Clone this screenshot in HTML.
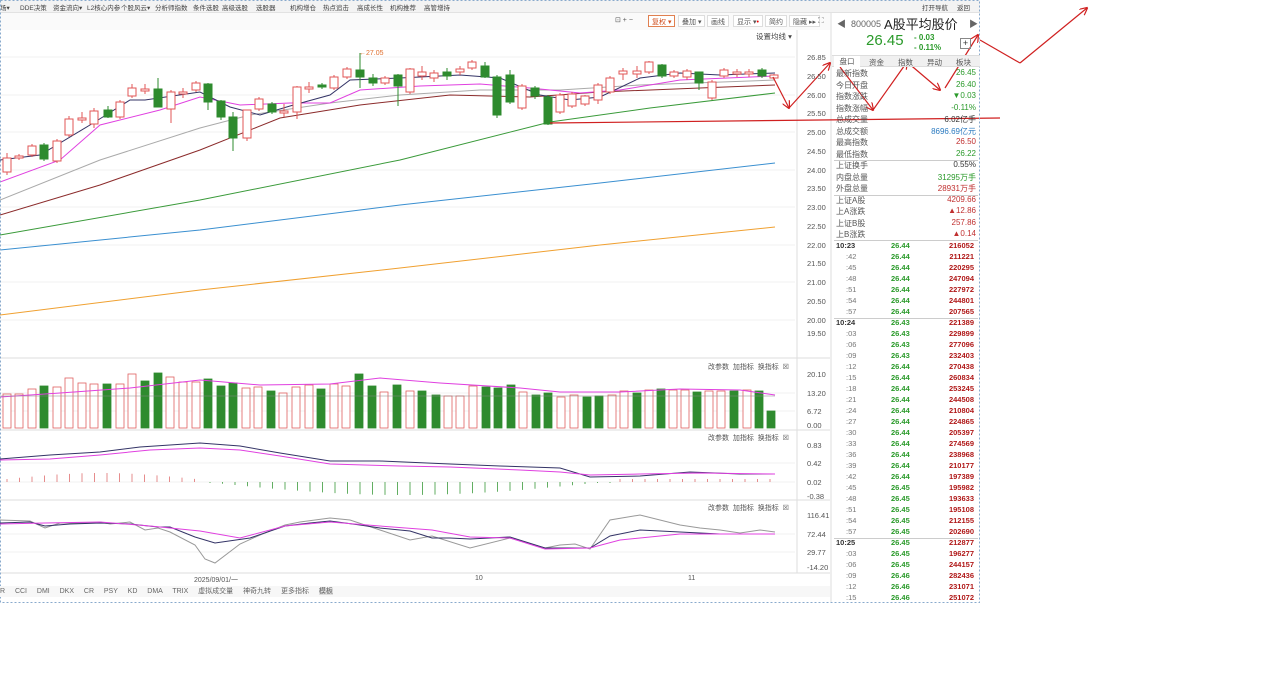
<!DOCTYPE html>
<html><head><meta charset="utf-8"><style>
*{margin:0;padding:0;box-sizing:border-box}
body{width:1278px;height:677px;background:#fff;font-family:"Liberation Sans","Noto Sans CJK SC",sans-serif;position:relative;overflow:hidden;font-size:8px;color:#333}
.abs{position:absolute;white-space:nowrap}
#menu{left:0;top:0;width:980px;height:13px;background:#f3f3f3;border-bottom:1px solid #e2e2e2}
#menu span{position:absolute;top:2px;font-size:6.5px;color:#444;white-space:nowrap}
#tool{left:0;top:13px;width:830px;height:17px;background:#fafafa}
.btn{position:absolute;top:15px;height:12px;font-size:7px;color:#555;padding:1px 3px;border:1px solid #ddd;background:#fff}
.ax{position:absolute;font-size:7.5px;color:#555;left:807px}
.row{position:absolute;left:836px;width:140px;height:11px;font-size:8px}
.row b{font-weight:normal;position:absolute;right:0}
.tk{position:absolute;left:836px;width:140px;height:11px;font-size:7.5px;font-weight:bold}
.tk i{font-style:normal;position:absolute}
.lab{position:absolute;font-size:7px;color:#555}
</style></head><body>
<div class="abs" id="menu">
<span style="left:0">场▾</span><span style="left:20px">DDE决策</span><span style="left:53px">资金流向▾</span><span style="left:87px">L2核心内参</span><span style="left:121px">个股风云▾</span><span style="left:155px">分析师指数</span><span style="left:193px">条件选股</span><span style="left:222px">高级选股</span><span style="left:256px">选股器</span><span style="left:290px">机构增仓</span><span style="left:323px">热点追击</span><span style="left:357px">高成长性</span><span style="left:390px">机构推荐</span><span style="left:424px">高管增持</span>
<span style="left:922px">打开导航</span><span style="left:957px">返回</span></div>
<div class="abs" id="tool"></div>
<div class="btn" style="left:612px;border:none;background:none">⊡ + −</div>
<div class="btn" style="left:648px;color:#d05020;border-color:#e08050">复权 ▾</div>
<div class="btn" style="left:678px">叠加 ▾</div>
<div class="btn" style="left:707px">画线</div>
<div class="btn" style="left:733px">显示 ▾<span style="color:#e00">•</span></div>
<div class="btn" style="left:765px">简约</div>
<div class="btn" style="left:789px">隐藏 ▸▸</div>
<div class="abs" style="left:818px;top:16px;font-size:8px;color:#777">⛶</div>
<div class="abs" style="left:756px;top:31px;font-size:7.5px;color:#444">设置均线 ▾</div>
<div class="abs" style="left:359px;top:50px;font-size:7px;color:#e07030">←27.05</div>

<svg class="abs" style="left:0;top:0" width="1278" height="677" id="sv">
<defs><marker id="ar" markerWidth="8" markerHeight="8" refX="7" refY="4" orient="auto" markerUnits="userSpaceOnUse"><path d="M0,0 L8,4 L0,8" fill="none" stroke="#d02020" stroke-width="1.2"/></marker></defs>
<g stroke="#f0f0f0" stroke-width="1">
<line x1="0" y1="57" x2="795" y2="57"/><line x1="0" y1="95" x2="795" y2="95"/><line x1="0" y1="132" x2="795" y2="132"/><line x1="0" y1="170" x2="795" y2="170"/><line x1="0" y1="207" x2="795" y2="207"/><line x1="0" y1="245" x2="795" y2="245"/><line x1="0" y1="282" x2="795" y2="282"/><line x1="0" y1="320" x2="795" y2="320"/>
<line x1="0" y1="393" x2="795" y2="393"/><line x1="0" y1="411" x2="795" y2="411"/><line x1="0" y1="463" x2="795" y2="463"/><line x1="0" y1="482" x2="795" y2="482"/><line x1="0" y1="534" x2="795" y2="534"/><line x1="0" y1="552" x2="795" y2="552"/>
</g>
<g stroke="#ddd"><line x1="0" y1="358" x2="830" y2="358"/><line x1="0" y1="430" x2="830" y2="430"/><line x1="0" y1="500" x2="830" y2="500"/><line x1="0" y1="573" x2="830" y2="573"/><line x1="797" y1="30" x2="797" y2="573"/><line x1="831" y1="13" x2="831" y2="603"/></g>
<g fill="none" stroke-width="1">
<polyline stroke="#f0a030" points="0,315 200,290 400,268 600,245 775,227"/>
<polyline stroke="#3a8fd0" points="0,250 200,230 400,205 600,183 775,163"/>
<polyline stroke="#3a9a3a" points="0,235 200,200 400,160 550,122 650,108 775,93"/>
<polyline stroke="#8b2b2b" points="0,215 100,185 200,150 280,118 360,105 450,95 530,97 600,92 700,88 775,85"/>
<polyline stroke="#aaa" points="0,200 100,160 200,128 250,115 330,103 400,95 480,90 560,90 640,85 775,80"/>
<polyline stroke="#e040e0" points="0,182 60,160 100,125 160,110 200,97 240,105 290,103 330,103 360,90 420,86 480,84 530,88 580,93 620,90 680,80 775,76"/>
<polyline stroke="#333366" points="0,160 40,155 90,125 130,100 145,100 200,92 230,107 260,115 290,106 330,95 350,80 400,78 460,75 500,78 540,95 570,100 600,97 640,78 680,73 720,75 775,73"/>
</g>
<g id="cd"></g><g id="vol"></g>
<g fill="none">
<polyline stroke="#e040e0" points="0,397 60,393 130,388 200,380 260,385 330,384 380,378 440,383 520,388 560,392 620,392 680,389 740,390 775,395"/>
<line x1="0" y1="396" x2="775" y2="396" stroke="#888" stroke-width="0.6"/>
<polyline stroke="#333366" points="0,459 50,455 100,452 140,447 200,443 240,446 280,453 330,461 380,461 450,464 500,466 560,468 590,477 640,476 690,472 740,474 775,474"/>
<polyline stroke="#e040e0" points="0,460 50,459 100,455 150,450 200,448 240,450 280,456 330,464 400,466 450,467 520,470 560,472 590,475 640,474 700,473 775,474"/>
<polyline stroke="#999" points="0,520 30,521 45,528 60,523 90,523 100,522 110,524 130,522 145,530 158,528 170,532 195,545 205,559 215,563 240,544 260,535 285,525 300,522 330,518 350,520 380,530 410,540 432,536 470,548 510,538 545,548 560,545 575,544 590,549 610,520 640,515 680,525 700,528 720,530 740,533 760,530 775,532"/>
<polyline stroke="#333366" points="0,523 30,522 45,526 70,524 100,523 130,524 158,527 170,527 195,537 215,543 250,538 285,526 310,523 330,521 360,525 380,528 410,531 432,538 450,538 470,539 510,537 545,548 590,548 610,536 640,530 680,532 720,534 775,534"/>
<polyline stroke="#e040e0" points="0,524 45,523 100,522 150,526 200,531 240,538 285,526 330,522 380,526 432,530 470,537 510,538 545,549 590,548 620,540 680,534 720,534 775,534"/>
</g>
<g id="mb"></g>
<g stroke="#d02020" stroke-width="1.2" fill="none">
<line x1="773" y1="77" x2="789" y2="108" marker-end="url(#ar)"/>
<line x1="789" y1="108" x2="830" y2="63" marker-end="url(#ar)"/>
<line x1="840" y1="67" x2="873" y2="110" marker-end="url(#ar)"/>
<line x1="873" y1="110" x2="907" y2="62" marker-end="url(#ar)"/>
<line x1="907" y1="62" x2="940" y2="90" marker-end="url(#ar)"/>
<line x1="945" y1="88" x2="978" y2="35" marker-end="url(#ar)"/>
<line x1="980" y1="40" x2="1020" y2="63"/>
<line x1="1020" y1="63" x2="1087" y2="8" marker-end="url(#ar)"/>
<line x1="550" y1="123" x2="1000" y2="118"/>
</g>
<rect x="0.5" y="0.5" width="979" height="602" fill="none" stroke="#88aacc" stroke-dasharray="2,2"/>
</svg>

<div class="ax" style="top:53px">26.85</div><div class="ax" style="top:72px">26.50</div><div class="ax" style="top:91px">26.00</div><div class="ax" style="top:109px">25.50</div><div class="ax" style="top:128px">25.00</div><div class="ax" style="top:147px">24.50</div><div class="ax" style="top:166px">24.00</div><div class="ax" style="top:184px">23.50</div><div class="ax" style="top:203px">23.00</div><div class="ax" style="top:222px">22.50</div><div class="ax" style="top:241px">22.00</div><div class="ax" style="top:259px">21.50</div><div class="ax" style="top:278px">21.00</div><div class="ax" style="top:297px">20.50</div><div class="ax" style="top:316px">20.00</div><div class="ax" style="top:329px">19.50</div>
<div class="ax" style="top:370px">20.10</div><div class="ax" style="top:389px">13.20</div><div class="ax" style="top:407px">6.72</div><div class="ax" style="top:421px">0.00</div>
<div class="ax" style="top:441px">0.83</div><div class="ax" style="top:459px">0.42</div><div class="ax" style="top:478px">0.02</div><div class="ax" style="top:492px">-0.38</div>
<div class="ax" style="top:511px">116.41</div><div class="ax" style="top:530px">72.44</div><div class="ax" style="top:548px">29.77</div><div class="ax" style="top:563px">-14.20</div>
<div class="lab" style="left:708px;top:362px">改参数 &nbsp;加指标 &nbsp;换指标 &nbsp;☒</div>
<div class="lab" style="left:708px;top:433px">改参数 &nbsp;加指标 &nbsp;换指标 &nbsp;☒</div>
<div class="lab" style="left:708px;top:503px">改参数 &nbsp;加指标 &nbsp;换指标 &nbsp;☒</div>
<div class="lab" style="left:194px;top:575px">2025/09/01/一</div><div class="lab" style="left:475px;top:575px">10</div><div class="lab" style="left:688px;top:575px">11</div>
<div class="lab" style="left:0;top:586px;color:#666;background:#f7f7f7;width:830px;height:11px;word-spacing:3px">R &nbsp;CCI &nbsp;DMI &nbsp;DKX &nbsp;CR &nbsp;PSY &nbsp;KD &nbsp;DMA &nbsp;TRIX &nbsp;虚拟成交量 &nbsp;神奇九转 &nbsp;更多指标 &nbsp;<span style="background:#ddd">模板</span></div>

<div class="abs" style="left:837px;top:17px;font-size:9px;color:#666">◀ &nbsp;800005</div>
<div class="abs" style="left:884px;top:14px;font-size:13px;color:#222">A股平均股价</div>
<div class="abs" style="left:969px;top:17px;font-size:9px;color:#666">▶</div>
<div class="abs" style="left:866px;top:32px;font-size:15px;color:#2a9a2a">26.45</div>
<div class="abs" style="left:914px;top:33px;font-size:8px;color:#2a9a2a;line-height:10px;font-weight:bold">- 0.03<br>- 0.11%</div>
<div class="abs" style="left:960px;top:38px;width:11px;height:11px;border:1px solid #888;font-size:9px;line-height:9px;text-align:center">+</div>
<div class="abs" style="left:832px;top:55px;width:148px;height:12px;background:#f0f0f0;border-top:1px solid #ddd;border-bottom:1px solid #ddd;font-size:7.5px;color:#555">
<span style="position:absolute;left:2px;top:0;width:26px;height:11px;background:#fff;text-align:center">盘口</span><span style="position:absolute;left:37px;top:1px">资金</span><span style="position:absolute;left:66px;top:1px">指数</span><span style="position:absolute;left:95px;top:1px">异动</span><span style="position:absolute;left:124px;top:1px">板块</span></div>
<div id="rp"></div>
<script>
var rows=[["最新指数","26.45","#2a9a2a"],["今日开盘","26.40","#2a9a2a"],["指数涨跌","▼0.03","#2a9a2a"],["指数涨幅","-0.11%","#2a9a2a"],["总成交量","6.02亿手","#333"],["总成交额","8696.69亿元","#2a7ac0"],["最高指数","26.50","#c03030"],["最低指数","26.22","#2a9a2a"],["上证换手","0.55%","#333"],["内盘总量","31295万手","#2a9a2a"],["外盘总量","28931万手","#c03030"],["上证A股","4209.66","#c03030"],["上A涨跌","▲12.86","#c03030"],["上证B股","257.86","#c03030"],["上B涨跌","▲0.14","#c03030"]];
var h="";rows.forEach(function(r,i){var y=68+i*11.5;h+='<div class="row" style="top:'+y+'px;color:#555">'+r[0]+'<b style="color:'+r[2]+'">'+r[1]+'</b></div>';});
[160,195,240].forEach(function(y){h+='<div class="abs" style="left:834px;top:'+y+'px;width:144px;border-top:1px solid #ccc"></div>'});
var tk=[["10:23","26.44","216052"],[":42","26.44","211221"],[":45","26.44","220295"],[":48","26.44","247094"],[":51","26.44","227972"],[":54","26.44","244801"],[":57","26.44","207565"],["10:24","26.43","221389"],[":03","26.43","229899"],[":06","26.43","277096"],[":09","26.43","232403"],[":12","26.44","270438"],[":15","26.44","260834"],[":18","26.44","253245"],[":21","26.44","244508"],[":24","26.44","210804"],[":27","26.44","224865"],[":30","26.44","205397"],[":33","26.44","274569"],[":36","26.44","238968"],[":39","26.44","210177"],[":42","26.44","197389"],[":45","26.45","195982"],[":48","26.45","193633"],[":51","26.45","195108"],[":54","26.45","212155"],[":57","26.45","202690"],["10:25","26.45","212877"],[":03","26.45","196277"],[":06","26.45","244157"],[":09","26.46","282436"],[":12","26.46","231071"],[":15","26.46","251072"]];
tk.forEach(function(t,i){var y=241+i*11,full=t[0].length>3;h+='<div class="tk" style="top:'+y+'px"><i style="left:'+(full?0:10)+'px;color:'+(full?'#333':'#777')+';font-weight:'+(full?'bold':'normal')+'">'+t[0]+'</i><i style="left:55px;color:#2a9a2a">'+t[1]+'</i><i style="right:2px;color:#b01818">'+t[2]+'</i></div>';
if(full&&i>0)h+='<div class="abs" style="left:834px;top:'+y+'px;width:144px;border-top:1px solid #ccc"></div>';});
document.getElementById('rp').innerHTML=h;
var NS="http://www.w3.org/2000/svg";
function el(g,tag,a){var e=document.createElementNS(NS,tag);for(var k in a)e.setAttribute(k,a[k]);document.getElementById(g).appendChild(e);}
var C=[[7,158,172,'R',153,175],[19,156,158,'R',154,160],[32,146,155,'R'],[44,145,159,'G'],[57,141,161,'R'],[69,119,135,'R',116,137],[82,118,120,'R',112,123],[94,111,124,'R',108,128],[108,110,117,'G',106,118],[120,102,117,'R'],[132,88,96,'R',84,98],[145,89,91,'R',84,94],[158,89,107,'G',78,107],[171,92,109,'R',90,123],[183,92,94,'R',88,98],[196,83,90,'R'],[208,84,102,'G',83,110],[221,101,117,'G',100,120],[233,117,138,'G',112,151],[247,110,138,'R',110,141],[259,99,109,'R'],[272,104,112,'G',102,114],[284,111,113,'R',104,117],[297,87,112,'R',86,119],[309,87,89,'R',82,93],[322,85,87,'G',83,89],[334,77,88,'R'],[347,69,77,'R',67,79],[360,70,77,'G',53,88],[373,78,83,'G',74,86],[385,78,83,'R'],[398,75,86,'G',74,106],[410,69,92,'R',68,94],[422,72,76,'R',66,80],[434,73,78,'R',70,82],[447,72,76,'G',68,80],[460,69,72,'R',66,75],[472,62,68,'R',60,70],[485,66,77,'G',62,78],[497,77,115,'G',75,118],[510,75,102,'G',70,104],[522,86,108,'R',84,110],[535,88,96,'G',86,99],[548,97,124,'G',95,125],[560,95,112,'R',93,114],[572,94,106,'R',92,108],[585,96,104,'R',95,106],[598,85,100,'R',83,104],[610,78,92,'R',76,94],[623,71,74,'R',68,80],[637,71,74,'R',66,78],[649,62,72,'R',61,74],[662,65,76,'G',64,78],[674,72,76,'R',70,78],[687,71,77,'R',69,80],[699,72,83,'G',72,90],[712,82,98,'R',80,100],[724,70,76,'R',68,78],[737,72,74,'R',69,77],[749,72,74,'R',69,77],[762,70,76,'G',68,78],[774,75,78,'R',74,80]];
C.forEach(function(c){var col=c[3]=='R'?'#e05555':'#2e8b2e';var wt=c[4]||c[1]-2,wb=c[5]||c[2]+2;
el('cd','line',{x1:c[0],x2:c[0],y1:wt,y2:wb,stroke:col,'stroke-width':1});
el('cd','rect',{x:c[0]-4,y:c[1],width:8,height:Math.max(1,c[2]-c[1]),fill:c[3]=='R'?'#fff':'#2e8b2e',stroke:col,'stroke-width':1});});
var V=[[7,394,'R'],[19,394,'R'],[32,389,'R'],[44,386,'G'],[57,387,'R'],[69,378,'R'],[82,383,'R'],[94,384,'R'],[107,384,'G'],[120,384,'R'],[132,374,'R'],[145,381,'G'],[158,373,'G'],[170,377,'R'],[183,382,'R'],[196,382,'R'],[208,379,'G'],[221,386,'G'],[233,383,'G'],[246,388,'R'],[258,387,'R'],[271,391,'G'],[283,393,'R'],[296,387,'R'],[309,385,'R'],[321,389,'G'],[334,384,'R'],[346,386,'R'],[359,374,'G'],[372,386,'G'],[384,392,'R'],[397,385,'G'],[410,391,'R'],[422,391,'G'],[436,395,'G'],[448,396,'R'],[460,396,'R'],[473,386,'R'],[486,387,'G'],[498,388,'G'],[511,385,'G'],[523,392,'R'],[536,395,'G'],[548,393,'G'],[561,397,'R'],[574,395,'R'],[587,397,'G'],[599,396,'G'],[612,395,'R'],[624,391,'R'],[637,393,'G'],[649,390,'R'],[661,389,'G'],[673,390,'R'],[685,390,'R'],[697,392,'G'],[709,391,'R'],[721,391,'R'],[734,391,'G'],[747,390,'R'],[759,391,'G'],[771,411,'G']];
V.forEach(function(v){el('vol','rect',{x:v[0]-4,y:v[1],width:8,height:428-v[1],fill:v[2]=='R'?'#fff':'#2e8b2e',stroke:v[2]=='R'?'#e06060':'#2e8b2e','stroke-width':0.8});});
for(var x=7;x<=200;x+=12.5){var hh=3+Math.sin((x-7)/60)*6;el('mb','line',{x1:x,x2:x,y1:482-hh,y2:482,stroke:'#e07070','stroke-width':0.8});}
for(var x=210;x<=610;x+=12.5){var hh=Math.max(1,Math.sin((x-205)/400*Math.PI)*13);el('mb','line',{x1:x,x2:x,y1:482,y2:482+hh,stroke:'#3a9a3a','stroke-width':0.8});}
for(var x=620;x<=770;x+=12.5){el('mb','line',{x1:x,x2:x,y1:479,y2:482,stroke:'#e07070','stroke-width':0.8});}
</script>
</body></html>
